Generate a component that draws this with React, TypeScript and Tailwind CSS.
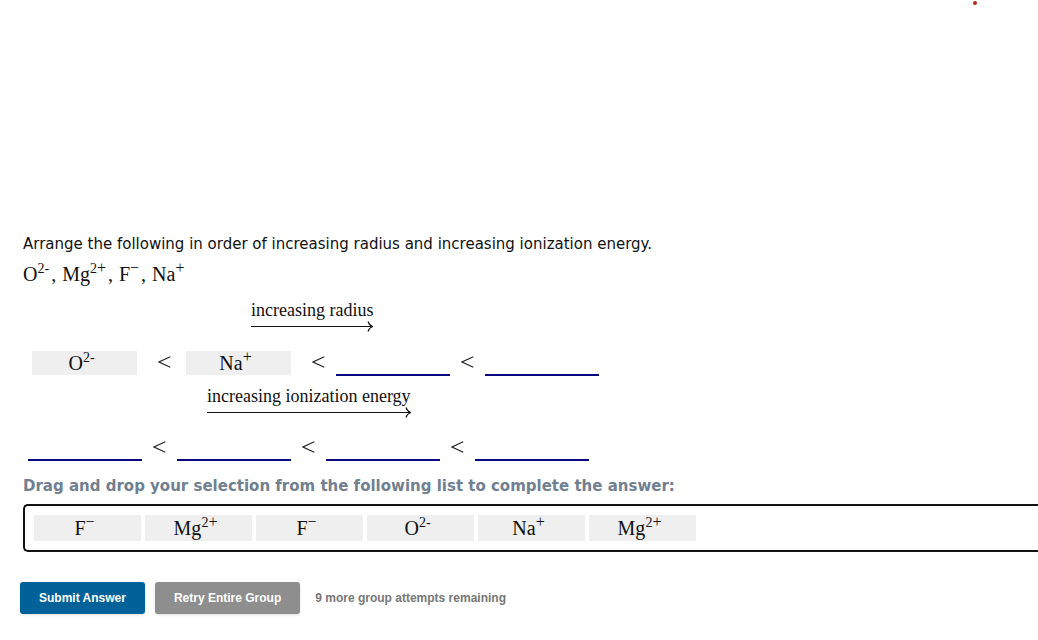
import React from "react";

type IonData = { base: string; count?: string; sign: string };

const O: IonData = { base: "O", count: "2", sign: "-" };
const MG: IonData = { base: "Mg", count: "2", sign: "+" };
const F: IonData = { base: "F", sign: "−" };
const NA: IonData = { base: "Na", sign: "+" };

const mathFont = "font-['Liberation_Serif',serif]";

function Ion({ ion }: { ion: IonData }) {
  return (
    <span className={`${mathFont} text-xl leading-6 text-[#111]`}>
      {ion.base}
      <sup className="-top-2 text-sm leading-none">
        {ion.count}
        <span className={ion.sign === "-" ? "text-sm" : "text-base leading-none"}>{ion.sign}</span>
      </sup>
    </span>
  );
}

function Chip({ ion, className }: { ion: IonData; className: string }) {
  return (
    <button
      type="button"
      draggable
      className={`flex cursor-grab items-center justify-center bg-[#efefef] pr-1.5 ${className}`}
    >
      <Ion ion={ion} />
    </button>
  );
}

function Slot({ ion }: { ion?: IonData }) {
  if (ion) {
    return (
      <div className="w-[119px] pb-px pl-1">
        <Chip ion={ion} className="h-6 w-[105px]" />
      </div>
    );
  }
  return <div className="h-6 w-[114px] border-b-2 border-[#0a0a80]" />;
}

function Ordering({ slots }: { slots: (IonData | undefined)[] }) {
  return (
    <div className="flex items-end pl-[5px]">
      {slots.map((ion, i) => (
        <React.Fragment key={i}>
          {i > 0 && (
            <span className="flex h-6 w-[35px] items-center justify-center pb-1">
              <svg width="13" height="12" viewBox="0 0 13 12" role="img" aria-label="less than">
                <path d="M12.3 0.8 L1 6 L12.3 11.2" fill="none" stroke="#222" strokeWidth="1.1" />
              </svg>
            </span>
          )}
          <Slot ion={ion} />
        </React.Fragment>
      ))}
    </div>
  );
}

function ArrowLabel({ text }: { text: string }) {
  return (
    <div className="inline-flex flex-col">
      <span className={`${mathFont} text-lg leading-5 text-[#111]`}>{text}</span>
      <span className="flex h-3 items-center">
        <span className="h-px flex-1 bg-[#111]" />
        <svg className="-ml-1.5" width="7" height="11" viewBox="0 0 7 11" aria-hidden="true">
          <path d="M2 0.5 Q3 4 6.6 5.5 Q3 7 2 10.5" fill="none" stroke="#111" strokeWidth="1.1" />
        </svg>
      </span>
    </div>
  );
}

export default function App() {
  return (
    <div className="relative min-h-screen bg-white pt-[232px] text-black">
      <span className="absolute top-px left-[973px] size-1 rounded-full bg-[#b3261e]" />
      <main className="pl-[23px]">
        <p className="font-['DejaVu_Sans',Verdana,sans-serif] text-[15px] leading-6 text-[#111]">
          Arrange the following in order of increasing radius and increasing ionization energy.
        </p>
        <p className={`${mathFont} mt-1.5 flex h-6 gap-1.5 text-xl leading-6 text-[#111]`}>
          {[O, MG, F, NA].map((ion, i) => (
            <span key={i}>
              <Ion ion={ion} />
              {i < 3 && <span className="pl-0.5">,</span>}
            </span>
          ))}
        </p>

        <div className="mt-3.5 flex pl-[228px]">
          <ArrowLabel text="increasing radius" />
        </div>
        <div className="mt-[19px]">
          <Ordering slots={[O, NA, undefined, undefined]} />
        </div>

        <div className="mt-2.5 flex pl-[184px]">
          <ArrowLabel text="increasing ionization energy" />
        </div>
        <div className="mt-[19px]">
          <Ordering slots={[undefined, undefined, undefined, undefined]} />
        </div>

        <h2 className="mt-[13px] font-['DejaVu_Sans',Verdana,sans-serif] text-[15px] leading-6 font-bold text-[#708090]">
          Drag and drop your selection from the following list to complete the answer:
        </h2>
        <div className="mt-1.5 flex gap-1 rounded-l-[5px] border-2 border-r-0 border-[#111] p-[9px]">
          {[F, MG, F, O, NA, MG].map((ion, i) => (
            <Chip key={i} ion={ion} className="h-[26px] w-[107px]" />
          ))}
        </div>
      </main>

      <footer className="mt-[30px] flex items-center gap-2.5 pl-5 font-['Liberation_Sans',Arial,sans-serif] text-xs font-bold">
        <button type="button" className="h-8 rounded-[3px] bg-[#006298] px-[19px] text-white shadow-sm">
          Submit Answer
        </button>
        <button type="button" className="h-8 rounded-[3px] bg-[#8e8e8e] px-[19px] text-white shadow-sm">
          Retry Entire Group
        </button>
        <span className="pl-[5px] text-[#777]">9 more group attempts remaining</span>
      </footer>
    </div>
  );
}
